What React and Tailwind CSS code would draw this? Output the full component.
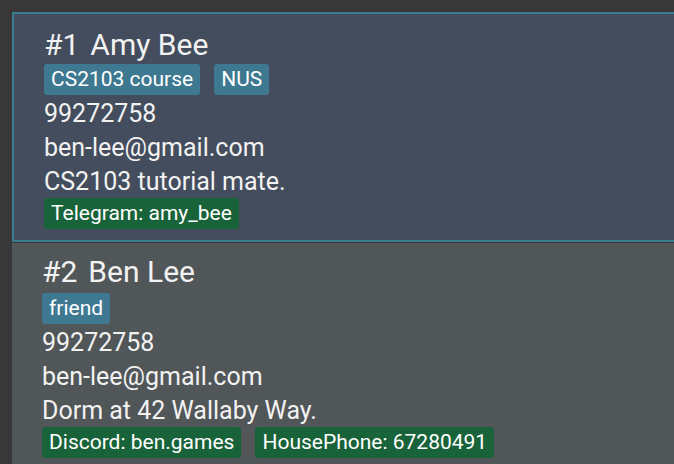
import React from 'react';

const people = [
  {
    id: 1,
    name: 'Amy Bee',
    tags: ['CS2103 course', 'NUS'],
    phone: '99272758',
    email: 'ben-lee@gmail.com',
    note: 'CS2103 tutorial mate.',
    socials: ['Telegram: amy_bee'],
  },
  {
    id: 2,
    name: 'Ben Lee',
    tags: ['friend'],
    phone: '99272758',
    email: 'ben-lee@gmail.com',
    note: 'Dorm at 42 Wallaby Way.',
    socials: ['Discord: ben.games', 'HousePhone: 67280491'],
  },
];

function Tag({ label, green }) {
  return (
    <span
      className={
        'h-[31px] px-[7px] rounded-[3px] flex items-center text-[21px] leading-none text-white ' +
        (green ? 'bg-[#19633a]' : 'bg-[#3e7891]')
      }
    >
      {label}
    </span>
  );
}

function PersonCard({ person, selected }) {
  return (
    <div
      className={
        selected
          ? 'h-[230px] border-2 border-r-0 border-[#3b7d8f] bg-[#434d5d] pl-[30px] pt-[14px]'
          : 'flex-1 bg-[#515658] pl-[30px] pt-[12px]'
      }
    >
      <div className="h-[34px] leading-[34px] text-[30px] text-[#f2f2f2] flex">
        <span>#{person.id}</span>
        <span className="ml-[11px]">{person.name}</span>
      </div>
      <div className={'flex gap-[14px] ' + (selected ? 'mt-[2px]' : 'mt-[4px]')}>
        {person.tags.map((t) => (
          <Tag key={t} label={t} />
        ))}
      </div>
      <div className="text-[25px] leading-[34px] text-[#f2f2f2] pt-[2px]">
        <div>{person.phone}</div>
        <div>{person.email}</div>
        <div>{person.note}</div>
      </div>
      <div className="flex gap-[14px] -mt-[1px]">
        {person.socials.map((s) => (
          <Tag key={s} label={s} green />
        ))}
      </div>
    </div>
  );
}

export default function App() {
  return (
    <div className="w-[674px] h-[464px] overflow-hidden bg-[#383838] pt-3 pl-3 flex flex-col font-['Roboto',sans-serif]">
      <PersonCard person={people[0]} selected />
      <div className="h-[1px]" />
      <PersonCard person={people[1]} />
    </div>
  );
}
